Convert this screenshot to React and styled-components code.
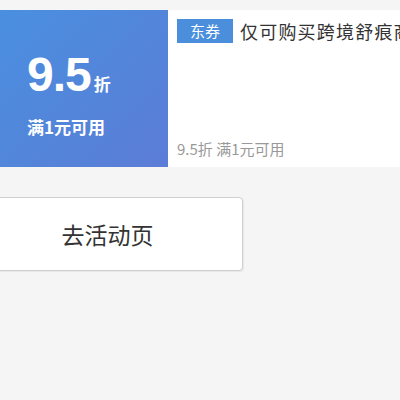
import React from "react";
import styled, { createGlobalStyle } from "styled-components";

const GlobalStyle = createGlobalStyle`
  html, body {
    margin: 0;
    padding: 0;
    background: #f5f5f5;
    font-family: "Noto Sans", "Noto Sans CJK SC", sans-serif;
    overflow: hidden;
  }
`;

const Page = styled.div`
  width: 400px;
  height: 400px;
  padding-top: 10px;
  box-sizing: border-box;
  overflow: hidden;
`;

const Card = styled.div`
  display: flex;
  height: 157px;
  width: 460px;
  background: #fff;
`;

const Face = styled.div`
  width: 168px;
  flex-shrink: 0;
  background: linear-gradient(135deg, #4a8fe0 0%, #5385da 55%, #5c7cd7 100%);
  color: #fff;
  display: flex;
  flex-direction: column;
  padding: 39px 0 0 27px;
  box-sizing: border-box;
`;

const Amount = styled.div`
  display: flex;
  align-items: baseline;
  font-family: "Liberation Sans", "Noto Sans CJK SC", sans-serif;
  font-weight: bold;
  font-size: 48px;
  line-height: 52px;
  letter-spacing: -1px;
`;

const Unit = styled.span`
  font-family: "Noto Sans CJK SC", sans-serif;
  font-size: 17px;
  font-weight: bold;
  margin-left: 3px;
  letter-spacing: 0;
`;

const Limit = styled.div`
  font-family: "Noto Sans CJK SC", sans-serif;
  font-size: 17px;
  font-weight: bold;
  line-height: 22px;
  margin-top: 6px;
`;

const Info = styled.div`
  flex: 1;
  display: flex;
  flex-direction: column;
  justify-content: space-between;
  padding: 8px 0 8px 9px;
  min-width: 0;
`;

const TitleRow = styled.div`
  display: flex;
  align-items: center;
  white-space: nowrap;
`;

const Tag = styled.span`
  display: inline-block;
  background: #4a8edc;
  color: #fff;
  font-family: "Noto Sans CJK SC", sans-serif;
  font-size: 15px;
  line-height: 24px;
  padding: 0 13px;
  margin-right: 7px;
`;

const Title = styled.span`
  font-family: "Noto Sans CJK SC", sans-serif;
  font-size: 18px;
  font-weight: 400;
  color: #333;
  letter-spacing: 1.2px;
`;

const Desc = styled.div`
  font-family: "Noto Sans CJK SC", sans-serif;
  font-size: 15px;
  color: #999;
  line-height: 20px;
`;

const ButtonWrap = styled.div`
  margin-top: 30px;
  margin-left: -28px;
`;

const Button = styled.button`
  width: 271px;
  height: 74px;
  background: #fff;
  border: 1px solid #cfcfcf;
  border-radius: 4px;
  box-shadow: 1px 1px 1px rgba(0, 0, 0, 0.06);
  font-family: "Noto Sans CJK SC", sans-serif;
  font-size: 23px;
  color: #333;
  padding: 0;
`;

export default function App() {
  return (
    <Page>
      <GlobalStyle />
      <Card>
        <Face>
          <Amount>
            9.5<Unit>折</Unit>
          </Amount>
          <Limit>满1元可用</Limit>
        </Face>
        <Info>
          <TitleRow>
            <Tag>东券</Tag>
            <Title>仅可购买跨境舒痕商品</Title>
          </TitleRow>
          <Desc>9.5折 满1元可用</Desc>
        </Info>
      </Card>
      <ButtonWrap>
        <Button>去活动页</Button>
      </ButtonWrap>
    </Page>
  );
}
